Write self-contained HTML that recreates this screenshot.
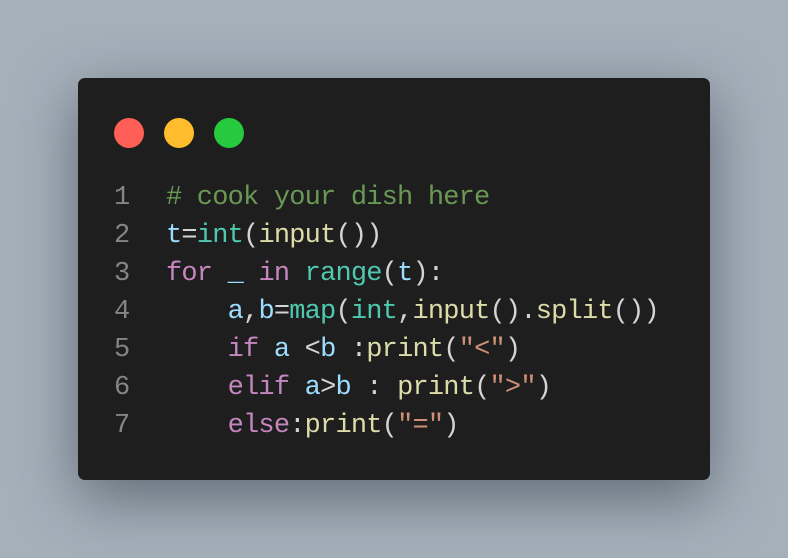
<!DOCTYPE html>
<html><head><style>
html,body{margin:0;padding:0;width:788px;height:558px;overflow:hidden;background:#a5b0bb;}
.card{position:absolute;left:78px;top:78px;width:632px;height:402px;background:#1e1e1e;border-radius:7px;box-shadow:0 18px 60px rgba(40,50,60,0.55);}
.dot{position:absolute;top:118px;width:30px;height:30px;border-radius:50%;}
pre{position:absolute;margin:0;top:179px;font-family:"Liberation Mono",monospace;font-size:27px;letter-spacing:-0.8px;line-height:38px;color:#d4d4d4;}
.n{left:114px;color:#858585;}
.c{left:166px;}
.cm{color:#6a9955}.v{color:#9cdcfe}.b{color:#4ec9b0}.f{color:#dcdcaa}.k{color:#c586c0}.s{color:#ce9178}
</style></head><body>
<div class="card"></div>
<div class="dot" style="left:114px;background:#ff5f56"></div>
<div class="dot" style="left:164px;background:#ffbd2e"></div>
<div class="dot" style="left:214px;background:#27c93f"></div>
<pre class="n">1
2
3
4
5
6
7</pre>
<pre class="c"><span class="cm"># cook your dish here</span>
<span class="v">t</span>=<span class="b">int</span>(<span class="f">input</span>())
<span class="k">for</span> <span class="v">_</span> <span class="k">in</span> <span class="b">range</span>(<span class="v">t</span>):
    <span class="v">a</span>,<span class="v">b</span>=<span class="b">map</span>(<span class="b">int</span>,<span class="f">input</span>().<span class="f">split</span>())
    <span class="k">if</span> <span class="v">a</span> &lt;<span class="v">b</span> :<span class="f">print</span>(<span class="s">"&lt;"</span>)
    <span class="k">elif</span> <span class="v">a</span>&gt;<span class="v">b</span> : <span class="f">print</span>(<span class="s">"&gt;"</span>)
    <span class="k">else</span>:<span class="f">print</span>(<span class="s">"="</span>)</pre>
</body></html>
